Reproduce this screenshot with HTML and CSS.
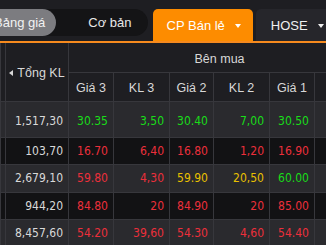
FILE: index.html
```html
<!DOCTYPE html>
<html lang="vi">
<head>
  <meta charset="UTF-8">
  <title>Bảng giá</title>
  <link rel="stylesheet" href="styles.css">
</head>
<body>
  <div class="topbar">
    <div class="segment">
      <div class="seg-item active">Bảng giá</div>
      <div class="seg-item">Cơ bản</div>
    </div>
    <div class="tab tab-orange">CP Bán lẻ <span class="caret"></span></div>
    <div class="tab tab-dark">HOSE <span class="caret"></span></div>
  </div>

  <table class="board">
    <colgroup>
      <col class="c-edge">
      <col class="c-total">
      <col class="c-price">
      <col class="c-vol">
      <col class="c-price2">
      <col class="c-vol">
      <col class="c-price">
      <col class="c-vol">
    </colgroup>
    <thead>
      <tr class="head-1">
        <th rowspan="2"></th>
        <th rowspan="2" class="total-head"><span class="arrow"></span>Tổng KL</th>
        <th colspan="6">Bên mua</th>
      </tr>
      <tr class="head-2">
        <th>Giá 3</th>
        <th>KL 3</th>
        <th>Giá 2</th>
        <th>KL 2</th>
        <th>Giá 1</th>
        <th>KL 1</th>
      </tr>
    </thead>
    <tbody>
      <tr class="first">
        <td></td>
        <td class="vol">1,517,30</td>
        <td class="up">30.35</td>
        <td class="up">3,50</td>
        <td class="up">30.40</td>
        <td class="up">7,00</td>
        <td class="up">30.50</td>
        <td class="up"></td>
      </tr>
      <tr class="dark">
        <td></td>
        <td class="vol">103,70</td>
        <td class="down">16.70</td>
        <td class="down">6,40</td>
        <td class="down">16.80</td>
        <td class="down">1,20</td>
        <td class="down">16.90</td>
        <td class="down"></td>
      </tr>
      <tr>
        <td></td>
        <td class="vol">2,679,10</td>
        <td class="down">59.80</td>
        <td class="down">4,30</td>
        <td class="ref">59.90</td>
        <td class="ref">20,50</td>
        <td class="up">60.00</td>
        <td class="up"></td>
      </tr>
      <tr class="dark">
        <td></td>
        <td class="vol">944,20</td>
        <td class="down">84.80</td>
        <td class="down">20</td>
        <td class="down">84.90</td>
        <td class="down">20</td>
        <td class="down">85.00</td>
        <td class="down"></td>
      </tr>
      <tr>
        <td></td>
        <td class="vol">8,457,60</td>
        <td class="down">54.20</td>
        <td class="down">39,60</td>
        <td class="down">54.30</td>
        <td class="down">4,60</td>
        <td class="down">54.40</td>
        <td class="down"></td>
      </tr>
    </tbody>
  </table>
</body>
</html>
```

FILE: styles.css
```css
body {
  margin: 0;
  width: 326px;
  height: 245px;
  overflow: hidden;
  background-color: #1e1e22;
  font-family: 'Liberation Sans', Arial, sans-serif;
  color: #d6d6d6;
}

/* thanh tab phía trên */
.topbar {
  display: flex;
  align-items: flex-end;
  height: 41px;
  margin-left: -18px;
  border-bottom: 2px solid #f68a1e;
  white-space: nowrap;
}

.segment {
  display: flex;
  height: 27px;
  margin-bottom: 5px;
  background-color: #141416;
  border-radius: 14px;
}

.seg-item {
  display: flex;
  align-items: center;
  font-size: 13px;
  color: #e8e8e8;
  padding: 0 16px 0 32px;
}

.seg-item.active {
  background-color: #7c7c80;
  color: #f2f2f2;
  border-radius: 14px;
  padding: 0 11px 0 12px;
}

.tab {
  display: flex;
  align-items: center;
  height: 31px;
  font-size: 13px;
  color: #f0f0f0;
  border-radius: 5px 5px 0 0;
}

.tab-orange {
  margin-left: 5px;
  padding: 1px 12px 0 14px;
  background-color: #fd8c00;
  color: #ffffff;
}

.tab-dark {
  margin-left: 3px;
  padding: 1px 6px 0 15px;
  background-color: #26262b;
}

.caret {
  display: inline-block;
  width: 0;
  height: 0;
  margin-left: 10px;
  border-left: 3.5px solid transparent;
  border-right: 3.5px solid transparent;
  border-top: 4px solid currentColor;
}

/* bảng giá */
.board {
  border-collapse: collapse;
  table-layout: fixed;
  width: 370px;
}

.c-edge { width: 5px; }
.c-total { width: 63px; }
.c-price { width: 45px; }
.c-price2 { width: 44px; }
.c-vol { width: 56px; }

.board th,
.board td {
  border: 1px solid #37373c;
  padding: 0 5px;
  overflow: hidden;
  white-space: nowrap;
}

.board th {
  font-weight: normal;
  font-size: 12.5px;
  color: #d8d8d8;
  background-color: #1e1e22;
  text-align: center;
  padding: 3px 0 0;
}

.board thead tr:first-child th {
  border-top: none;
}

.head-1 { height: 29px; }
.head-2 { height: 29px; }

.arrow {
  display: inline-block;
  width: 0;
  height: 0;
  margin-right: 4px;
  vertical-align: 1px;
  border-top: 3.5px solid transparent;
  border-bottom: 3.5px solid transparent;
  border-right: 4px solid #d8d8d8;
}

.board td {
  font-family: 'DejaVu Sans Condensed', 'DejaVu Sans', sans-serif;
  font-size: 12px;
  text-align: right;
  height: 26.5px;
  padding-top: 0;
  padding-bottom: 0;
  background-color: #2a2a2e;
}

.board tr.first td {
  height: 31px;
  padding-top: 4px;
}

.board tr.dark td {
  background-color: #121214;
}

.vol { color: #d9d9d9; }
.up { color: #19dc19; }
.down { color: #ec2f3b; }
.ref { color: #e9c000; }
```
